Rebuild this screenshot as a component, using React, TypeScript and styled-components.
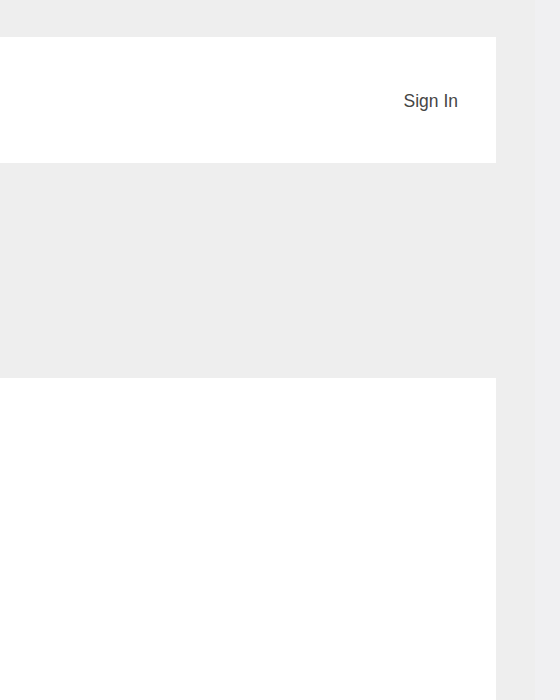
import React from "react";
import styled, { createGlobalStyle } from "styled-components";

const GlobalStyle = createGlobalStyle`
  html, body {
    margin: 0;
    padding: 0;
    background: #eeeeee;
    font-family: "Liberation Sans", Arial, sans-serif;
  }
`;

function App() {
  return (
    <>
      <GlobalStyle />
      <Page>
        <Main>
          <Header>
            <SignIn href="#">Sign In</SignIn>
          </Header>
          <Content />
        </Main>
        <Side />
      </Page>
    </>
  );
}

const Page = styled.div`
  display: grid;
  grid-template-columns: 496px 1fr;
  column-gap: 39px;
  height: 700px;
  overflow: hidden;
`;

const Main = styled.div`
  display: flex;
  flex-direction: column;
  padding-top: 37px;
  gap: 215px;
`;

const Header = styled.header`
  height: 126px;
  box-sizing: border-box;
  padding: 2px 38px 0 0;
  background: #ffffff;
  display: flex;
  align-items: center;
  justify-content: flex-end;
`;

const SignIn = styled.a`
  font-size: 17.5px;
  color: #454545;
  text-decoration: none;
  cursor: pointer;
`;

const Content = styled.section`
  flex: 1;
  background: #ffffff;
`;

const Side = styled.aside`
  background: #f0f0f2;
`;

export default App;
